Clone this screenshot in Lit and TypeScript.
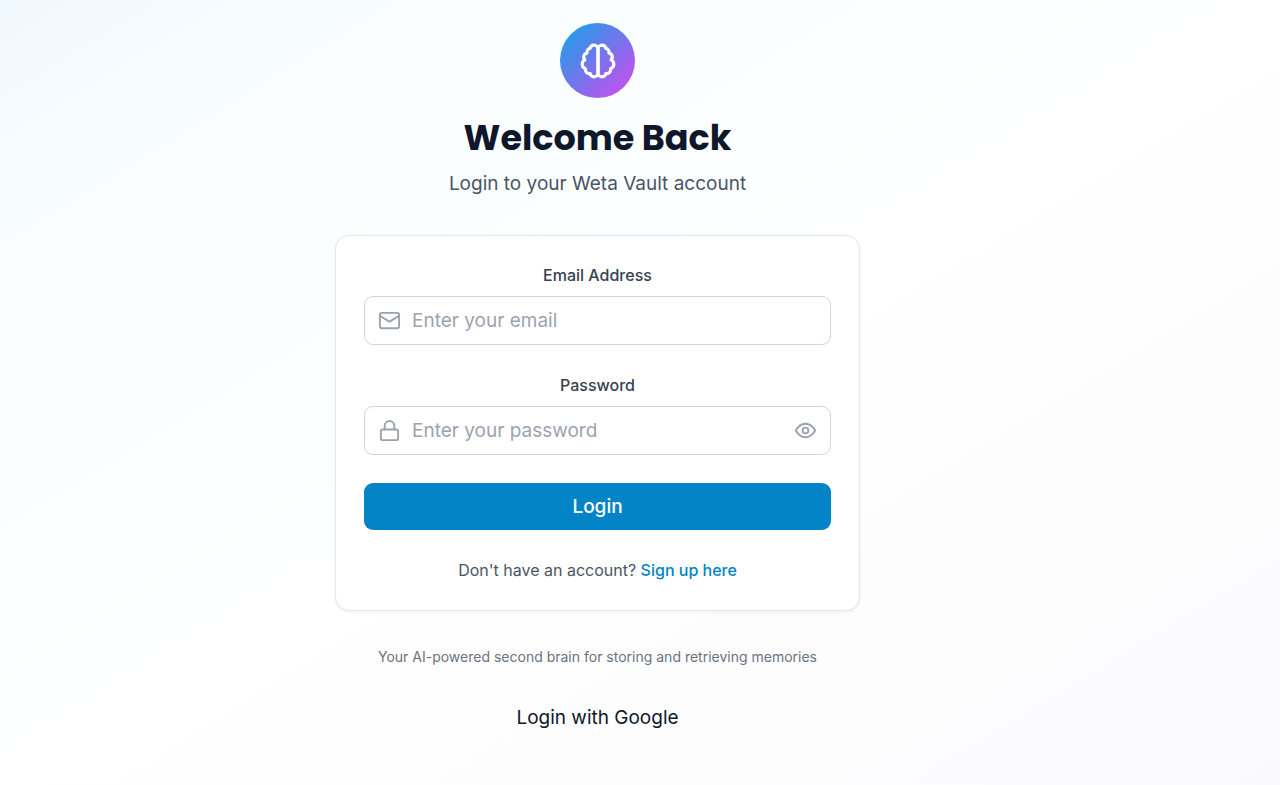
import { LitElement, html, css, svg } from "lit";
import { customElement, state } from "lit/decorators.js";

const brain = svg`
  <path d="M9.5 2A2.5 2.5 0 0 1 12 4.5v15a2.5 2.5 0 0 1-4.96.44 2.5 2.5 0 0 1-2.96-3.08 3 3 0 0 1-.34-5.58 2.5 2.5 0 0 1 1.32-4.24 2.5 2.5 0 0 1 1.98-3A2.5 2.5 0 0 1 9.5 2Z"/>
  <path d="M14.5 2A2.5 2.5 0 0 0 12 4.5v15a2.5 2.5 0 0 0 4.96.44 2.5 2.5 0 0 0 2.96-3.08 3 3 0 0 0 .34-5.58 2.5 2.5 0 0 0-1.32-4.24 2.5 2.5 0 0 0-1.98-3A2.5 2.5 0 0 0 14.5 2Z"/>`;
const mail = svg`
  <rect width="20" height="16" x="2" y="4" rx="2"/>
  <path d="m22 7-8.97 5.7a1.94 1.94 0 0 1-2.06 0L2 7"/>`;
const lock = svg`
  <rect width="18" height="11" x="3" y="11" rx="2" ry="2"/>
  <path d="M7 11V7a5 5 0 0 1 10 0v4"/>`;
const eye = svg`
  <path d="M2 12s3-7 10-7 10 7 10 7-3 7-10 7-10-7-10-7Z"/>
  <circle cx="12" cy="12" r="3"/>`;

@customElement("app-root")
export class AppRoot extends LitElement {
  @state() private showPassword = false;

  static styles = css`
    :host {
      display: block;
      min-height: 100vh;
      box-sizing: border-box;
      padding: 23px 85px 23px 0;
      background: linear-gradient(to bottom right, #f0f9ff 0%, #f7fcff 12%, #fafeff 28%, #ffffff 50%, #fafafc 100%);
      font-family: Inter, "Liberation Sans", sans-serif;
      font-size: 19px;
      line-height: 28px;
      color: #0f172a;
    }
    .page {
      display: flex;
      flex-direction: column;
      align-items: center;
      width: 100%;
      max-width: 525px;
      margin: 0 auto;
      text-align: center;
    }
    .icon {
      display: block;
      width: 23px;
      height: 23px;
      flex: none;
      fill: none;
      stroke: currentColor;
      stroke-width: 2;
      stroke-linecap: round;
      stroke-linejoin: round;
    }
    .logo {
      display: grid;
      place-items: center;
      width: 75px;
      height: 75px;
      border-radius: 50%;
      background: linear-gradient(to bottom right, #0ea5e9, #d946ef);
      color: #fff;
    }
    .logo .icon {
      width: 38px;
      height: 38px;
    }
    h1 {
      margin: 19px 0 11px;
      font-family: Poppins, Inter, sans-serif;
      font-size: 35px;
      line-height: 42px;
      font-weight: 700;
    }
    p {
      margin: 0;
    }
    .subtitle {
      color: #4b5563;
    }
    .card {
      box-sizing: border-box;
      width: 100%;
      margin-top: 37px;
      padding: 27px 28px 28px;
      background: #fff;
      border: 1px solid #e5e7eb;
      border-radius: 14px;
      box-shadow: 0 1px 3px rgba(0, 0, 0, 0.06);
    }
    form {
      display: flex;
      flex-direction: column;
      gap: 28px;
    }
    .label {
      display: block;
      margin-bottom: 9px;
      font-size: 16px;
      line-height: 24px;
      font-weight: 500;
      color: #374151;
    }
    .box {
      display: flex;
      align-items: center;
      gap: 11px;
      height: 47px;
      padding: 0 13px;
      border: 1px solid #d1d5db;
      border-radius: 9px;
      background: #fff;
      color: #9ca3af;
    }
    .box:focus-within {
      border-color: #0284c7;
    }
    .input {
      flex: 1;
      min-width: 0;
      padding: 0;
      border: 0;
      outline: 0;
      background: none;
      font: inherit;
      color: #0f172a;
    }
    .input::placeholder {
      color: #9ca3af;
      opacity: 1;
    }
    button {
      padding: 0;
      border: 0;
      background: none;
      font: inherit;
      color: inherit;
      cursor: pointer;
    }
    .submit {
      height: 47px;
      border-radius: 9px;
      background: #0284c7;
      color: #fff;
      font-weight: 500;
    }
    .signup {
      margin-top: 28px;
      font-size: 16px;
      line-height: 24px;
      color: #4b5563;
    }
    .signup a {
      color: #0284c7;
      font-weight: 500;
      text-decoration: none;
    }
    .tagline {
      margin-top: 36px;
      font-size: 14px;
      line-height: 20px;
      color: #6b7280;
    }
    .google {
      margin-top: 37px;
    }
  `;

  private icon(shape: unknown) {
    return html`<svg class="icon" viewBox="0 0 24 24" aria-hidden="true">${shape}</svg>`;
  }

  private toggle() {
    this.showPassword = !this.showPassword;
  }

  render() {
    return html`
      <main class="page">
        <div class="logo">${this.icon(brain)}</div>
        <h1>Welcome Back</h1>
        <p class="subtitle">Login to your Weta Vault account</p>

        <section class="card">
          <form @submit=${(e: Event) => e.preventDefault()}>
            <div>
              <label class="label" for="email">Email Address</label>
              <div class="box">
                ${this.icon(mail)}
                <input class="input" id="email" type="email" placeholder="Enter your email" />
              </div>
            </div>
            <div>
              <label class="label" for="password">Password</label>
              <div class="box">
                ${this.icon(lock)}
                <input
                  class="input"
                  id="password"
                  type=${this.showPassword ? "text" : "password"}
                  placeholder="Enter your password"
                />
                <button type="button" aria-label="Show password" @click=${this.toggle}>
                  ${this.icon(eye)}
                </button>
              </div>
            </div>
            <button class="submit" type="submit">Login</button>
          </form>
          <p class="signup">Don't have an account? <a href="#">Sign up here</a></p>
        </section>

        <p class="tagline">Your AI-powered second brain for storing and retrieving memories</p>
        <button class="google" type="button">Login with Google</button>
      </main>
    `;
  }
}
